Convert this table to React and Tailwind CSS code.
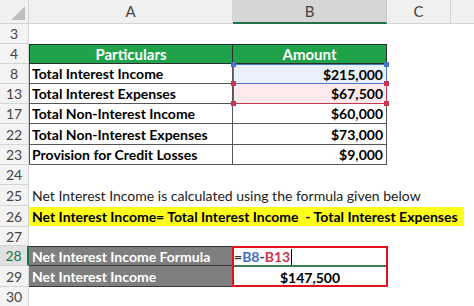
import React from 'react';

const font = "font-['Lato','Open_Sans','Liberation_Sans',sans-serif]";

const RowNum = ({ n, active }) => (
  <div
    className={
      'w-[29px] shrink-0 flex items-center justify-center text-[14px] border-b ' +
      (active
        ? 'bg-[#e1e1e1] text-[#217346] border-r-2 border-r-[#217346] border-b-[#d4d4d4]'
        : 'bg-[#f3f3f3] text-[#444] border-r border-[#d4d4d4]')
    }
  >
    {n}
  </div>
);

const Row = ({ n, h = 'h-[20px]', active, children }) => (
  <div className={'flex ' + h}>
    <RowNum n={n} active={active} />
    {children}
  </div>
);

const Corner = ({ pos, color }) => (
  <span className={'absolute w-[5px] h-[5px] ' + pos + ' ' + color} />
);

const dataRows = [
  { n: 17, label: 'Total Non-Interest Income', amount: '$60,000' },
  { n: 22, label: 'Total Non-Interest Expenses', amount: '$73,000' },
  { n: 23, label: 'Provision for Credit Losses', amount: '$9,000' },
];

export default function App() {
  return (
    <div className={'w-[474px] h-[306px] overflow-hidden bg-white text-black ' + font}>
      {/* Column headers */}
      <div className="flex h-[24px] bg-[#f0f0f0] text-[15px] text-[#444]">
        <div className="w-[29px] shrink-0 relative border-r border-b border-[#d4d4d4]">
          <svg width="14" height="14" className="absolute right-[3px] bottom-[3px]">
            <polygon points="14,0 14,14 0,14" fill="#bfbfbf" />
          </svg>
        </div>
        <div className="w-[204px] shrink-0 flex items-center justify-center border-r border-b border-[#d4d4d4]">A</div>
        <div className="w-[154px] shrink-0 flex items-center justify-center bg-[#d6d6d6] border-r border-[#c6c6c6] border-b-2 border-b-[#217346]">B</div>
        <div className="w-[64px] shrink-0 flex items-center justify-center border-r border-b border-[#d4d4d4]">C</div>
        <div className="flex-1 border-b border-[#d4d4d4]" />
      </div>

      <Row n={3} />

      <Row n={4}>
        <div className="w-[204px] shrink-0 bg-[#1fa34a] border border-[#2d2d2d] text-white font-bold text-[15px] flex items-center justify-center">
          Particulars
        </div>
        <div className="w-[154px] shrink-0 bg-[#1fa34a] border-y border-r border-[#2d2d2d] text-white font-bold text-[15px] flex items-center justify-center">
          Amount
        </div>
      </Row>

      <Row n={8}>
        <div className="w-[204px] shrink-0 border-l border-r border-b border-[#555] font-bold text-[14px] flex items-center pl-[2px]">
          Total Interest Income
        </div>
        <div className="w-[154px] shrink-0 relative bg-[#e9f0fa] border border-[#4a78c8] font-bold text-[14px] flex items-center justify-end pr-[3px]">
          $215,000
          <Corner pos="-left-[3px] -top-[3px]" color="bg-[#4a78c8]" />
          <Corner pos="-right-[3px] -top-[3px]" color="bg-[#4a78c8]" />
        </div>
      </Row>

      <Row n={13}>
        <div className="w-[204px] shrink-0 border-l border-r border-b border-[#555] font-bold text-[14px] flex items-center pl-[2px]">
          Total Interest Expenses
        </div>
        <div className="w-[154px] shrink-0 relative bg-[#fbe9ec] border border-t-0 border-[#c8374f] font-bold text-[14px] flex items-center justify-end pr-[3px]">
          $67,500
          <Corner pos="-left-[3px] -top-[3px]" color="bg-[#c8374f]" />
          <Corner pos="-right-[3px] -top-[3px]" color="bg-[#c8374f]" />
          <Corner pos="-left-[3px] -bottom-[3px]" color="bg-[#c8374f]" />
          <Corner pos="-right-[3px] -bottom-[3px]" color="bg-[#c8374f]" />
        </div>
      </Row>

      {dataRows.map((r) => (
        <Row key={r.n} n={r.n} h={r.n === 22 ? 'h-[21px]' : 'h-[20px]'}>
          <div className="w-[204px] shrink-0 border-l border-r border-b border-[#555] font-bold text-[14px] flex items-center pl-[2px]">
            {r.label}
          </div>
          <div className="w-[154px] shrink-0 border-r border-b border-[#555] font-bold text-[14px] flex items-center justify-end pr-[3px]">
            {r.amount}
          </div>
        </Row>
      ))}

      <Row n={24} />

      <Row n={25} h="h-[21px]">
        <div className="flex items-center pl-[3px] text-[14px] text-[#222] whitespace-nowrap">
          Net Interest Income is calculated using the formula given below
        </div>
      </Row>

      <Row n={26} h="h-[21px]">
        <div className="flex items-center">
          <div className="w-[435px] h-[19px] bg-[#ffff19] flex items-center pl-[3px] font-bold text-[14px] whitespace-pre">
            {'Net Interest Income= Total Interest Income  - Total Interest Expenses'}
          </div>
        </div>
      </Row>

      <Row n={27} h="h-[19px]" />

      {/* Formula block */}
      <div className="flex">
        <div className="flex flex-col">
          <Row n={28} active>
            <div className="w-[204px] shrink-0 bg-[#7f7f7f] border-t border-b border-[#3a3a3a] text-white font-bold text-[14px] flex items-center pl-[3px]">
              Net Interest Income Formula
            </div>
          </Row>
          <Row n={29} h="h-[21px]">
            <div className="w-[204px] shrink-0 bg-[#7f7f7f] border-b border-[#3a3a3a] text-white font-bold text-[14px] flex items-center pl-[3px]">
              Net Interest Income
            </div>
          </Row>
        </div>
        <div className="w-[156px] -ml-[1px] shrink-0 h-[41px] border-2 border-[#e3101a] flex flex-col">
          <div className="h-[19px] border-b-2 border-[#3f7a58] flex items-center font-bold text-[14px]">
            <span className="text-[#333]">=</span>
            <span className="text-[#3f6fc6]">B8</span>
            <span className="text-[#333]">-</span>
            <span className="text-[#c8374f]">B13</span>
            <span className="w-px h-[16px] bg-black ml-[1px]" />
          </div>
          <div className="flex-1 flex items-center justify-center font-bold text-[14px]">$147,500</div>
        </div>
      </div>

      <Row n={30} />
    </div>
  );
}
